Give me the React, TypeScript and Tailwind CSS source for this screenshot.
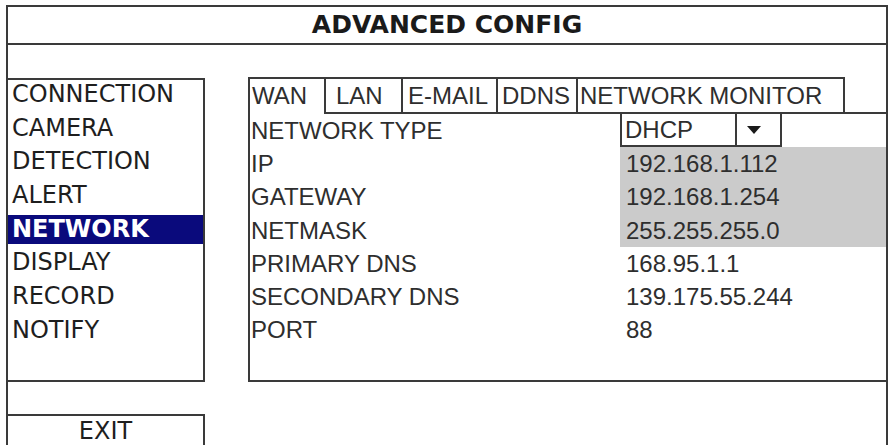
import React from "react";

const MENU = ["CONNECTION", "CAMERA", "DETECTION", "ALERT", "NETWORK", "DISPLAY", "RECORD", "NOTIFY"];

const TABS = [
  { name: "WAN", w: "w-[78px]", pad: "pl-[2px]", first: true, active: true },
  { name: "LAN", w: "w-[77px]", pad: "pl-[10px]" },
  { name: "E-MAIL", w: "w-[95px]", pad: "pl-[5px]" },
  { name: "DDNS", w: "w-[80px]", pad: "pl-[4px]" },
  { name: "NETWORK MONITOR", w: "w-[267px]", pad: "pl-[2px]" },
];

const FIELDS = [
  { label: "IP", value: "192.168.1.112", shaded: true },
  { label: "GATEWAY", value: "192.168.1.254", shaded: true },
  { label: "NETMASK", value: "255.255.255.0", shaded: true },
  { label: "PRIMARY DNS", value: "168.95.1.1" },
  { label: "SECONDARY DNS", value: "139.175.55.244" },
  { label: "PORT", value: "88" },
];

const sans = "font-['Liberation_Sans',Arial,sans-serif]";
const menuFont = "font-['DejaVu_Sans',Verdana,sans-serif]";

function Tab({ t }: { t: (typeof TABS)[number] }) {
  return (
    <div
      className={`${t.w} ${t.pad} h-[37px] shrink-0 border-t-2 border-r-2 border-[#3a3a3a] ${
        t.first ? "border-l-2" : ""
      } ${t.active ? "" : "border-b-2"} text-[24px] leading-[33px] text-[#2e2e2e] whitespace-nowrap`}
    >
      {t.name}
    </div>
  );
}

export default function App() {
  return (
    <div className="w-[890px] h-[445px] overflow-hidden bg-white">
      <div className="ml-[6px] mt-[5px] w-[882px] h-[460px] border-2 border-[#3a3a3a] flex flex-col">
        {/* title bar */}
        <div
          className={`h-[38px] shrink-0 border-b-2 border-[#3a3a3a] flex items-center justify-center ${menuFont} font-bold text-[25px] text-[#1a1a1a]`}
        >
          ADVANCED CONFIG
        </div>

        <div className="flex flex-1">
          {/* left menu column */}
          <div className="w-[197px] shrink-0 flex flex-col pt-[33px]">
            <div className="h-[304px] border-t-2 border-r-2 border-b-2 border-[#3a3a3a] flex flex-col gap-[4.7px]">
              {MENU.map((m) => (
                <div
                  key={m}
                  className={`h-[29px] leading-[29px] pl-[4px] text-[24px] ${menuFont} ${
                    m === "NETWORK" ? "bg-[#0a0a7c] text-white font-bold" : "text-[#1e1e1e]"
                  }`}
                >
                  {m}
                </div>
              ))}
            </div>
            <div
              className={`mt-[32px] h-[40px] border-t-2 border-r-2 border-[#3a3a3a] flex justify-center pt-[1px] text-[24px] leading-[29px] ${menuFont} text-[#1e1e1e]`}
            >
              EXIT
            </div>
          </div>

          {/* network settings panel */}
          <div className={`ml-[43px] flex-1 flex flex-col pt-[32px] ${sans}`}>
            <div className="flex items-end">
              {TABS.map((t) => (
                <Tab key={t.name} t={t} />
              ))}
              <div className="flex-1 h-[37px] border-b-2 border-[#3a3a3a]" />
            </div>

            <div className="h-[268px] border-l-2 border-b-2 border-[#3a3a3a] flex flex-col text-[24px] text-[#2e2e2e]">
              {/* network type row with dropdown */}
              <div className="h-[33.2px] flex">
                <div className="w-[370px] pl-[1px] leading-[33.2px] whitespace-nowrap">NETWORK TYPE</div>
                <div className="flex">
                  <div className="w-[115px] h-[33px] border-l-2 border-b-2 border-[#3a3a3a] pl-[3px] leading-[31px]">
                    DHCP
                  </div>
                  <div className="w-[47px] h-[33px] border-l-2 border-r-2 border-b-2 border-[#3a3a3a] flex items-center pl-[10px]">
                    <svg width="14" height="8" viewBox="0 0 14 8">
                      <path d="M0 0 H14 L7 8 Z" fill="#1a1a1a" />
                    </svg>
                  </div>
                </div>
              </div>

              {FIELDS.map((f) => (
                <div key={f.label} className="h-[33.2px] flex">
                  <div className="w-[370px] pl-[1px] leading-[33.2px] whitespace-nowrap">{f.label}</div>
                  <div
                    className={`flex-1 pl-[6px] leading-[33.2px] ${f.shaded ? "bg-[#cbcbcb]" : ""}`}
                  >
                    {f.value}
                  </div>
                </div>
              ))}
            </div>
          </div>
        </div>
      </div>
    </div>
  );
}
